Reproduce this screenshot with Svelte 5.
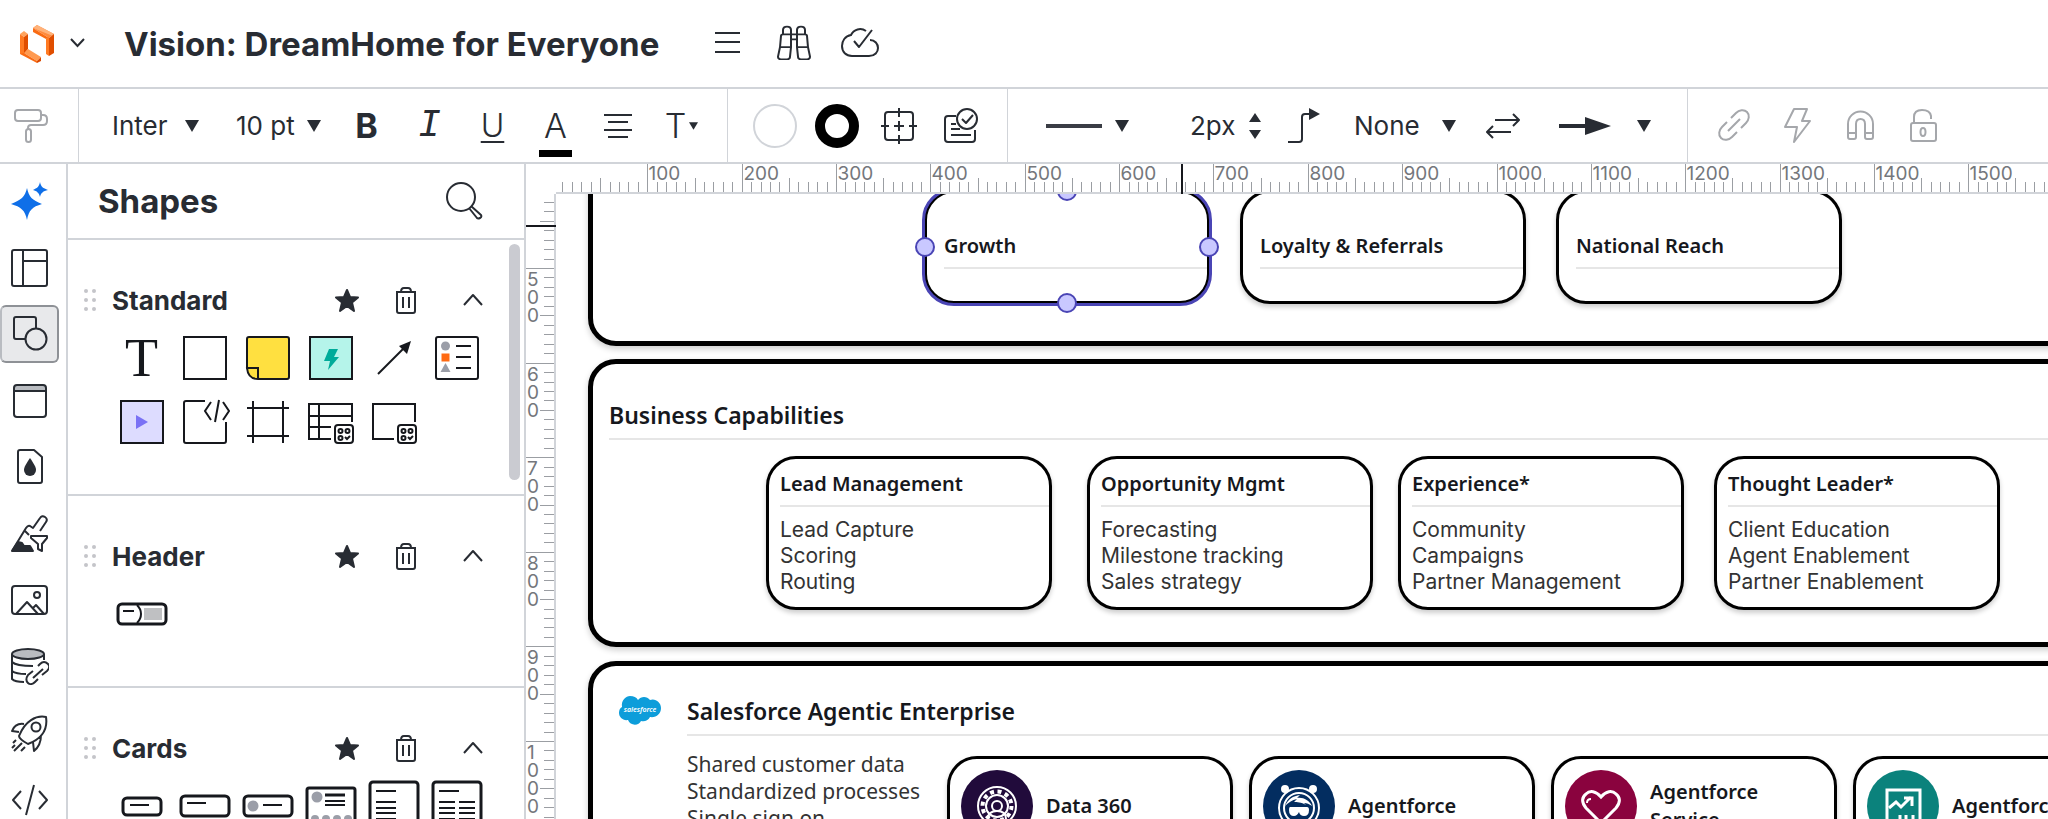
<script>
	let title = 'Vision: DreamHome for Everyone';
	let font = 'Inter';
	let size = '10 pt';
	let lineWidth = '2px';
	let lineJump = 'None';
	let activeTool = 'shapes';

	// icon bodies, all stroked with currentColor by the svg around them
	const icons = {
		menu: '<path d="M4 6h25M4 15h25M4 25h25"/>',
		binoculars:
			'<path transform="translate(5 2) scale(1 .86)" d="M7 12V7q0-4 4-4t4 4v5M21 12V7q0-4 4-4t4 4v5M4 27l1-13q0-2 2-2h22q2 0 2 2l1 13M4 27h11V12M21 12v15h11M15 18h6M4 27L2 38q0 3 3 3h6q3 0 3-3l1-11M32 27l2 11q0 3-3 3h-6q-3 0-3-3l-1-11"/>',
		cloud:
			'<path transform="translate(0 -2)" d="M25 8A10 10 0 0 0 10 12C4 13 1 18 1 23c0 6 4 10 10 10h17c6 0 9-4 9-8s-3-8-8-8M13 18l5 6L31 7"/>',
		roller:
			'<rect x="1" y="2" width="26" height="11" rx="3"/><path d="M27 7h2q4 0 4 4v2q0 4-4 4H17q-3 0-3 3v1"/><rect x="12" y="21" width="5" height="13" rx="2.5"/>',
		align: '<path d="M3 7h28M7 14h20M3 22h28M7 29h20"/>',
		crosshair:
			'<path d="M13 4H7q-3 0-3 3v6M23 4h6q3 0 3 3v6M13 32H7q-3 0-3-3v-6M23 32h6q3 0 3-3v-6M13 4h10M13 32h10M4 13v10M32 13v10M18 0v9M18 27v9M0 18h8M28 18h8M18 13v10M13 18h10"/>',
		review:
			'<path d="M13 8H5q-3 0-3 3v20q0 3 3 3h24q3 0 3-3V22M8 16h5M8 21h9M8 27h20"/><circle cx="24" cy="11" r="10"/><path d="M19 11l4 4 7-8"/>',
		elbow: '<path d="M1 34h11q3 0 3-3V9q0-3 3-3h6"/><path fill="currentColor" stroke="none" d="M22 0l11 6-11 6z"/>',
		swap: '<path d="M9 12h24M27 6l6 6-6 6M25 24H1M7 18l-6 6 6 6"/>',
		link: '<path d="M14 10l5-5c3-3 8-4 11-1s2 8-1 11l-5 5M20 24l-5 5c-3 3-8 4-11 1s-2-8 1-11l5-5M11 23L23 11"/>',
		bolt: '<path d="M14 1h13l-5 12h8L14 34l3-15H5z"/>',
		magnet:
			'<path d="M5 29V16a12 12 0 0 1 25 0v13q0 2-2 2h-4q-2 0-2-2V16q0-5-4.500-5T13 16v13q0 2-2 2H7q-2 0-2-2zM5 25h8M22 25h8"/>',
		lock: '<rect x="5" y="15" width="25" height="18" rx="2"/><path d="M8 15V9q0-7 8-7t9 6v3"/><ellipse cx="17" cy="24" rx="2.500" ry="4"/>',
		search:
			'<circle cx="15" cy="15" r="14"/><path d="M25 24l10 9q1 2-1 3t-3 0l-8-10"/>',
		sparkle:
			'<path fill="#0f6fe8" stroke="none" d="M16 6c2 9 5 12 15 16-10 3-13 6-15 16-2-10-6-13-16-16 10-4 14-7 16-16zM29 0c1 5 3 6 8 8-5 1-7 3-8 7-1-4-3-6-7-7 4-2 6-3 7-8z"/>',
		templates: '<rect x="1" y="1" width="35" height="36" rx="2"/><path d="M12 1v36M12 12h24"/>',
		shapes: '<path d="M14 24H5q-2 0-2-2V4q0-2 2-2h18q2 0 2 2v9"/><circle cx="25" cy="24" r="10.500"/>',
		container:
			'<path fill="#b9bcc1" stroke="none" d="M3 4h32v6H3z"/><rect x="3" y="3" width="32" height="32" rx="3"/><path d="M3 9h32"/>',
		drop: '<path d="M9 2h14l8 7v24q0 2-2 2H9q-2 0-2-2V4q0-2 2-2z"/><path fill="currentColor" stroke="none" d="M19 10c4 6 6 9 6 12a6 6 0 0 1-12 0c0-3 2-6 6-12z"/>',
		brush:
			'<path d="M1 36L15 13q2-3 4-2l3 2 7-10q2-3 5-1t1 5l-6 9M14 16l4 4"/><path fill="currentColor" d="M1 36l6-9 4 1 2 3h6l3 5z"/><path d="M20 21h16v2l-5 6v7l-4-2v-5l-7-6z"/>',
		image:
			'<rect x="1" y="5" width="35" height="28" rx="3"/><circle cx="26" cy="14" r="3"/><path d="M5 33l11-12 11 12M22 27l3-3 8 9"/>',
		data: '<ellipse cx="17" cy="6" rx="16" ry="5" fill="#b9bcc1"/><path d="M1 6v25q3 3 12 3M33 6v6M1 14q4 4 21 4M1 23q4 3 14 3M27 18l2-2c3-3 6-2 8 0s1 5-1 7l-5 4M27 31l-3 3c-2 2-5 3-7 1s-2-5 0-8l5-4M22 30l10-9"/>',
		rocket:
			'<path d="M35 3c-10-2-21 4-27 19q0 3 9 8c13-5 20-14 18-27zM13 10C6 9 3 12 1 17l7 1M30 21c0 7-2 12-7 16l-1-9M5 26l-3 3M11 29l-8 8M14 33l-4 4M1 34l3-3"/><circle cx="25" cy="13" r="4.500"/>',
		code: '<path d="M10 10L2 19l8 9M28 10l8 9-8 9M23 4l-8 30"/>',
		star: '<path fill="currentColor" d="M13 3l3 7 8 .5-6 5 2 8.500-7-5-7 5 2-8.500-6-5 8-.5z"/>',
		trash:
			'<path d="M3 5h20M8 5q0-4 3-4h4q3 0 3 4M4 5v19q0 2 2 2h14q2 0 2-2V5M10 10v11M16 10v11"/>',
		up: '<path d="M4 18l9-10 9 10"/>'
	};

	const rail = [
		['sparkle', 'AI assistant'],
		['templates', 'Templates'],
		['shapes', 'Shapes'],
		['container', 'Containers'],
		['drop', 'Themes'],
		['brush', 'Conditional formatting'],
		['image', 'Images'],
		['data', 'Data linking'],
		['rocket', 'Accelerators'],
		['code', 'Developer tools']
	];

	// library tiles, drawn in a 52px box
	const badge =
		'<rect x="30" y="29" width="18" height="18" rx="3"/><circle cx="35.500" cy="35" r="2"/><circle cx="42.500" cy="35" r="2"/><circle cx="35.500" cy="42" r="2"/><path d="M40 41l2 2 3-3"/>';
	const libraries = [
		{
			name: 'Standard',
			tiles: [
				{ name: 'Text', letter: 'T' },
				{ name: 'Block', art: '<path d="M5 5h42v42H5z"/>' },
				{
					name: 'Sticky note',
					art: '<path fill="#ffe040" d="M7 5h38q2 0 2 2v38q0 2-2 2H17L5 36V7q0-2 2-2z"/><path fill="#ffe040" d="M5 36h11v11Q6 47 5 36z"/>'
				},
				{
					name: 'Quick action',
					art: '<path fill="#b5f4ea" d="M5 5h42v42H5z"/><path fill="#00ab9a" stroke="none" d="M24 17h9l-4 8h5L23 38l2-9h-6z"/>'
				},
				{
					name: 'Line',
					art: '<path d="M10 42l26-26"/><path fill="currentColor" stroke="none" d="M43 9l-4 13-8-8z"/>'
				},
				{
					name: 'Legend',
					art: '<rect x="5" y="5" width="42" height="42" rx="2"/><g stroke="none" fill="#9b9ea8"><circle cx="14.500" cy="14" r="4.500"/><path d="M14.500 31l5 9h-10z"/><path fill="#ff6a13" d="M10.500 21.500h8v8h-8z"/></g><path d="M25 14h15M25 25h15M25 36h15"/>'
				},
				{
					name: 'Video',
					art: '<path fill="#dddcff" d="M5 5h42v42H5z"/><path fill="#7a72f5" stroke="none" d="M20 19l12 7-12 7z"/>'
				},
				{
					name: 'Embed',
					art: '<path d="M26 5H7q-2 0-2 2v38q0 2 2 2h38q2 0 2-2V26M32 6l-6 9 6 9M44 6l6 9-6 9M40 4l-4 22"/>'
				},
				{ name: 'Frame', art: '<path d="M5 12h42M5 40h42M11 5v42M41 5v42"/>' },
				{
					name: 'Dynamic table',
					art: `<path d="M47 26V8H4v35h22M4 20h43M4 31h22M14 8v35"/>${badge}`
				},
				{ name: 'Dynamic shape', art: `<path d="M47 26V8H5v35h21"/>${badge}` }
			]
		},
		{
			name: 'Header',
			tiles: [
				{
					name: 'Header bar',
					art: '<rect x="2" y="16" width="48" height="20" rx="4" stroke-width="3"/><path d="M21 17q4 4 4 9t-4 9M7 23h11"/><path fill="#bfc0c2" stroke="none" d="M28 20h18v12H28z"/>'
				}
			]
		},
		{
			name: 'Cards',
			tiles: [
				{
					name: 'Small card',
					art: '<rect x="7" y="18" width="38" height="17" rx="4" stroke-width="3"/><path d="M14 25h19"/>'
				},
				{
					name: 'Card',
					art: '<rect x="2" y="16" width="48" height="20" rx="4" stroke-width="3"/><path d="M8 23h19"/>'
				},
				{
					name: 'Card with icon',
					art: '<rect x="2" y="16" width="48" height="20" rx="4" stroke-width="3"/><circle cx="11" cy="26" r="5.500" fill="#9b9ea8" stroke="none"/><path d="M21 25h19"/>'
				},
				{
					name: 'Profile card',
					art: '<rect x="2" y="8" width="48" height="42" rx="2" stroke-width="3"/><g fill="#9b9ea8" stroke="none"><circle cx="12" cy="17" r="5.500"/><circle cx="10" cy="39" r="4"/><circle cx="21" cy="39" r="4"/><circle cx="32" cy="39" r="4"/><circle cx="43" cy="39" r="4"/></g><path stroke-width="3" d="M20 15h20"/><path d="M20 21h20M20 25h20"/>'
				},
				{
					name: 'Text card',
					art: '<rect x="2" y="2" width="48" height="50" rx="3" stroke-width="3"/><path d="M8 11h20M8 22h20M8 28h20M8 33h20M8 39h20"/>'
				},
				{
					name: 'Two column card',
					art: '<rect x="2" y="2" width="48" height="50" rx="3" stroke-width="3"/><path d="M8 11h20M8 22h16M8 28h16M8 33h16M8 39h16M28 22h16M28 28h16M28 33h16M28 39h16"/>'
				}
			]
		}
	];

	// a tick every ten document units, snapped to whole screen pixels
	function ticks(from, to, offset, scale) {
		let list = [];
		for (let unit = from; unit <= to; unit += 10) {
			list.push({
				unit,
				at: Math.round(offset + unit * scale) + 0.5,
				kind: unit % 100 === 0 ? 'major' : unit % 50 === 0 ? 'mid' : 'minor'
			});
		}
		return list;
	}
	const across = ticks(10, 1580, -3, 0.9435);
	const down = ticks(430, 1080, -399, 0.946);
	const tickStart = { major: 0, mid: 14, minor: 18 };

	const goals = [
		{ x: 368, title: 'Growth', selected: true },
		{ x: 684, title: 'Loyalty & Referrals' },
		{ x: 1000, title: 'National Reach' }
	];
	const capabilities = [
		{ x: 210, title: 'Lead Management', items: ['Lead Capture', 'Scoring', 'Routing'] },
		{
			x: 531,
			title: 'Opportunity Mgmt',
			items: ['Forecasting', 'Milestone tracking', 'Sales strategy']
		},
		{ x: 842, title: 'Experience*', items: ['Community', 'Campaigns', 'Partner Management'] },
		{
			x: 1158,
			title: 'Thought Leader*',
			items: ['Client Education', 'Agent Enablement', 'Partner Enablement']
		}
	];
	const products = [
		{
			x: 391,
			title: 'Data 360',
			color: '#210b3b',
			art: '<circle cx="36" cy="36" r="19"/><circle cx="36" cy="36" r="14.500" stroke-width="4" stroke-dasharray="4 3.600"/><circle cx="36" cy="36" r="11" fill="#210b3b"/><circle cx="36" cy="36" r="5"/><path d="M27 52v-3q0-8 9-8t9 8v3"/>'
		},
		{
			x: 693,
			title: 'Agentforce',
			color: '#032d60',
			art: '<circle cx="36" cy="38" r="20"/><circle cx="22" cy="19" r="3" fill="#fff"/><circle cx="50" cy="19" r="3" fill="#fff"/><circle cx="36" cy="38" r="15"/><path fill="#fff" stroke="none" d="M22 36c3-7 8-10 15-11l-3 3c6-1 12 2 15 8-3-2-5-3-8-3l2 2c-5-3-9-3-12-3l3-3c-5 1-9 4-12 7z"/><path fill="#fff" stroke="none" d="M27 37h17q2 0 2 3 0 6-5 6-4 0-5-4-2 4-5 4-5 0-5-6 0-3 1-3z"/>'
		},
		{
			x: 995,
			title: 'Agentforce Service',
			color: '#8a033e',
			art: '<path stroke-width="3" d="M36 53L21 38c-5-6-4-11 0-14 4-4 10-3 15 3 5-6 11-7 15-3 4 3 5 8 0 14z"/><path d="M22 33q0-4 4-4"/>'
		},
		{
			x: 1297,
			title: 'Agentforce',
			color: '#0b827c',
			art: '<path stroke-width="3" d="M20 54V20h33v34z"/><path stroke-width="3" d="M22 38l7-6 5 5 10-10M37 28h8v8M27 54v-5M33 54v-9M39 54v-9M46 54v-9"/>'
		}
	];
</script>

{#snippet icon(name, box = 38)}
	<svg class="icon" width={box} height={box} viewBox="0 0 {box} {box}" aria-hidden="true">
		{@html icons[name]}
	</svg>
{/snippet}

{#snippet caret()}
	<svg class="caret" width="14" height="12" viewBox="0 0 14 12" aria-hidden="true">
		<path d="M0 0h14l-7 12z" />
	</svg>
{/snippet}

<div class="app">
	<header>
		<button class="logo" aria-label="Home menu">
			<svg width="66" height="40" viewBox="0 0 66 40" aria-hidden="true">
				<path fill="#ff8a3c" d="M13 4l4-3 17 9-5 4z" />
				<path fill="#ffb27a" d="M13 4l4-3 17 9-1 2z" />
				<path fill="#f96b13" d="M13 4l16 10-3 1L13 8z" />
				<path fill="#ff7a22" d="M26 15l3-2v19l-3-2z" />
				<path fill="#e04e00" d="M29 14l5-4v19l-5 3z" />
				<path fill="#ffa45e" d="M0 10l4-3 4 3-4 3z" />
				<path fill="#ff7a22" d="M0 10l4 3v17L0 30z" />
				<path fill="#e04e00" d="M4 13l4-3v15l-4 5z" />
				<path fill="#ff9a50" d="M4 29l4-4 13 8-4 4z" />
				<path fill="#f96b13" d="M0 30l4-1 13 8v2z" />
				<path fill="#d94800" d="M17 37l4-4v4l-4 2z" />
				<path fill="none" stroke="#282c33" stroke-width="2" d="M51 15l6.500 7 6.500-7" />
			</svg>
		</button>
		<h1>{title}</h1>
		<nav>
			<button aria-label="Menu">{@render icon('menu', 34)}</button>
			<button aria-label="Find">{@render icon('binoculars', 44)}</button>
			<button aria-label="Saved">{@render icon('cloud')}</button>
		</nav>
	</header>

	<div class="toolbar">
		<div class="group painter">
			<button aria-label="Format painter" class="muted">{@render icon('roller', 36)}</button>
		</div>

		<div class="group type">
			<label class="field family">
				<select bind:value={font} aria-label="Font">
					<option>Inter</option>
					<option>Arial</option>
				</select>
				{@render caret()}
			</label>
			<label class="field points">
				<select bind:value={size} aria-label="Font size">
					<option>10 pt</option>
					<option>12 pt</option>
				</select>
				{@render caret()}
			</label>
			<button class="slot bold" aria-label="Bold">B</button>
			<button class="slot italic" aria-label="Italic">I</button>
			<button class="slot underline" aria-label="Underline">U</button>
			<button class="slot ink" aria-label="Text color">A</button>
			<button class="slot" aria-label="Align">{@render icon('align', 35)}</button>
			<button class="slot more" aria-label="Text options">
				T<svg class="caret" width="9" height="8" viewBox="0 0 14 12"><path d="M0 0h14l-7 12z" /></svg>
			</button>
		</div>

		<div class="group paint">
			<button class="slot" aria-label="Fill color"><span class="fill"></span></button>
			<button class="slot" aria-label="Line color"><span class="ring"></span></button>
			<button class="slot" aria-label="Position">{@render icon('crosshair', 36)}</button>
			<button class="slot" aria-label="Status">{@render icon('review', 36)}</button>
		</div>

		<div class="group lines">
			<button class="style" aria-label="Line style">
				<span class="stroke"></span>
				{@render caret()}
			</button>
			<label class="field width">
				<input type="text" bind:value={lineWidth} aria-label="Line width" />
				<svg class="caret" width="12" height="26" viewBox="0 0 12 26" aria-hidden="true">
					<path d="M6 0l6 9H0zM6 26l6-9H0z" />
				</svg>
			</label>
			<button class="elbow" aria-label="Line shape">{@render icon('elbow', 35)}</button>
			<label class="field jump">
				<select bind:value={lineJump} aria-label="Start arrow">
					<option>None</option>
					<option>Arrow</option>
				</select>
				{@render caret()}
			</label>
			<button class="swap" aria-label="Swap ends">{@render icon('swap', 35)}</button>
			<button class="end" aria-label="End arrow">
				<svg class="caret" width="52" height="18" viewBox="0 0 52 18" aria-hidden="true">
					<path d="M0 7h26V0l26 9-26 9v-7H0z" />
				</svg>
				{@render caret()}
			</button>
		</div>

		<div class="group last">
			{#each ['link', 'bolt', 'magnet', 'lock'] as name}
				<button class="slot muted" aria-label={name}>{@render icon(name, 35)}</button>
			{/each}
		</div>
	</div>

	<div class="body">
		<nav class="rail">
			{#each rail as [name, label]}
				<button class:active={activeTool === name} aria-label={label}>
					{@render icon(name)}
				</button>
			{/each}
		</nav>

		<aside>
			<div class="heading">
				<h2>Shapes</h2>
				<button aria-label="Search shapes">{@render icon('search')}</button>
			</div>
			<div class="libraries">
				{#each libraries as library}
					<section>
						<div class="name">
							<span class="grip">
								{#each Array(6) as _}<i></i>{/each}
							</span>
							<h3>{library.name}</h3>
							<button aria-label="Pin">{@render icon('star', 26)}</button>
							<button aria-label="Remove">{@render icon('trash', 27)}</button>
							<button aria-label="Collapse">{@render icon('up', 26)}</button>
						</div>
						<div class="tiles">
							{#each library.tiles as tile}
								<button aria-label={tile.name}>
									{#if tile.letter}
										<span class="letter">{tile.letter}</span>
									{:else}
										<svg class="icon tile" width="52" height="52" viewBox="0 0 52 52">
											{@html tile.art}
										</svg>
									{/if}
								</button>
							{/each}
						</div>
					</section>
				{/each}
				<span class="scrollbar"></span>
			</div>
		</aside>

		<main>
			<div class="corner"></div>
			<svg class="ruler top" aria-hidden="true">
				{#each across as tick}
					<line class={tick.kind} x1={tick.at} x2={tick.at} y1={tickStart[tick.kind]} y2="28" />
					{#if tick.kind === 'major'}
						<text x={tick.at + 1} y="16">{tick.unit}</text>
					{/if}
				{/each}
				<line class="cursor" x1="626" x2="626" y1="0" y2="30" />
			</svg>
			<svg class="ruler side" aria-hidden="true">
				{#each down as tick}
					<line class={tick.kind} x1={tickStart[tick.kind]} x2="28" y1={tick.at} y2={tick.at} />
					{#if tick.kind === 'major'}
						{#each String(tick.unit) as digit, i}
							<text x="1" y={tick.at + 17 + i * 18}>{digit}</text>
						{/each}
					{/if}
				{/each}
				<line class="cursor" x1="0" x2="30" y1="32" y2="32" />
			</svg>

			<div class="canvas">
				<div class="frame goals"></div>
				<div class="frame capabilities">
					<h2>Business Capabilities</h2>
				</div>
				<div class="frame enterprise">
					<svg width="44" height="32" viewBox="0 0 44 32" aria-hidden="true">
						<path
							fill="#0d9dda"
							d="M4 12C3 5 8 1 12 1c4 0 6 1 8 4 3-4 9-4 12 0 5-2 11 2 11 8s-5 10-11 9c-2 4-6 5-9 4-2 5-11 5-13-1-5 1-9-3-9-7 0-3 1-5 3-6z"
						/>
						<text x="22" y="17" text-anchor="middle">salesforce</text>
					</svg>
					<div>
						<h2>Salesforce Agentic Enterprise</h2>
						<p>Shared customer data<br />Standardized processes<br />Single sign on</p>
					</div>
				</div>

				{#each goals as node}
					<article class="goal" class:selected={node.selected} style="left: {node.x}px">
						<h4>{node.title}</h4>
						{#if node.selected}
							<b class="handle n"></b>
							<b class="handle e"></b>
							<b class="handle s"></b>
							<b class="handle w"></b>
						{/if}
					</article>
				{/each}

				{#each capabilities as node}
					<article class="capability" style="left: {node.x}px">
						<h4>{node.title}</h4>
						<ul>
							{#each node.items as item}
								<li>{item}</li>
							{/each}
						</ul>
					</article>
				{/each}

				{#each products as node}
					<article class="product" style="left: {node.x}px">
						<svg width="72" height="72" viewBox="0 0 72 72" aria-hidden="true">
							<circle cx="36" cy="36" r="36" fill={node.color} stroke="none" />
							{@html node.art}
						</svg>
						<h4>{node.title}</h4>
					</article>
				{/each}
			</div>
		</main>
	</div>
</div>

<style>
	:global(body) {
		overflow: hidden;
	}
	.app {
		--ink: #282c33;
		--line: #d1d4d9;
		height: 100vh;
		display: flex;
		flex-direction: column;
		background: #fff;
		color: var(--ink);
		font-family: Inter, sans-serif;
	}
	* {
		box-sizing: border-box;
	}
	h1,
	h2,
	h3,
	h4,
	p,
	ul {
		margin: 0;
		padding: 0;
	}
	button {
		display: flex;
		align-items: center;
		justify-content: center;
		flex: none;
		padding: 0;
		border: 0;
		background: none;
		color: inherit;
		font: inherit;
	}
	svg {
		display: block;
		flex: none;
	}
	.icon {
		fill: none;
		stroke: currentColor;
		stroke-width: 2;
		stroke-linejoin: round;
	}
	.caret {
		fill: var(--ink);
	}

	header {
		flex: none;
		display: flex;
		align-items: center;
		height: 89px;
		padding: 0 20px;
		border-bottom: 2px solid var(--line);
	}
	h1 {
		margin-left: 38px;
		font-size: 33px;
		font-weight: 700;
		white-space: nowrap;
	}
	header nav {
		display: flex;
		align-items: center;
		gap: 26px;
		margin-left: 52px;
	}

	.toolbar {
		flex: none;
		display: flex;
		height: 75px;
		border-bottom: 2px solid var(--line);
		font-size: 26px;
	}
	.group {
		flex: none;
		display: flex;
		align-items: center;
		border-right: 1px solid var(--line);
	}
	.last {
		border: 0;
		padding-left: 15px;
	}
	.muted {
		color: #a5a7ab;
	}
	.painter {
		width: 79px;
		padding-left: 14px;
	}
	.type {
		padding: 0 14px 0 33px;
	}
	.paint {
		padding: 0 15px 0 16px;
	}
	.lines {
		padding: 0 36px 0 38px;
	}
	.slot {
		width: 63px;
		height: 60px;
	}
	.paint .slot {
		width: 62px;
	}
	.field {
		flex: none;
		display: flex;
		align-items: center;
	}
	.field select,
	.field input {
		appearance: none;
		flex: none;
		padding: 0;
		border: 0;
		background: none;
		color: inherit;
		font: inherit;
	}
	.family {
		width: 124px;
	}
	.family select {
		width: 73px;
	}
	.points {
		width: 99px;
	}
	.points select {
		width: 71px;
	}
	.bold {
		font-size: 34px;
		font-weight: 700;
	}
	.italic {
		font-family: 'Liberation Mono', monospace;
		font-size: 38px;
		font-style: italic;
	}
	.underline {
		font-size: 32px;
		font-weight: 300;
		text-decoration: underline 2px;
		text-underline-offset: 4px;
	}
	.ink {
		position: relative;
		font-size: 34px;
		font-weight: 300;
	}
	.ink::after {
		content: '';
		position: absolute;
		left: 15px;
		bottom: -1px;
		width: 33px;
		height: 7px;
		background: #000;
	}
	.more {
		gap: 3px;
		font-size: 34px;
		font-weight: 300;
	}
	.fill,
	.ring {
		width: 44px;
		height: 44px;
		border: 2px solid var(--line);
		border-radius: 50%;
	}
	.ring {
		border: 10px solid #000;
	}
	.style {
		gap: 13px;
	}
	.stroke {
		width: 56px;
		height: 4px;
		background: #3a3d45;
	}
	.width {
		margin-left: 61px;
	}
	.width input {
		width: 59px;
	}
	.elbow {
		margin-left: 26px;
	}
	.jump {
		margin-left: 32px;
	}
	.jump select {
		width: 88px;
	}
	.swap {
		margin-left: 30px;
	}
	.end {
		margin-left: 38px;
		gap: 26px;
	}

	.body {
		flex: 1;
		display: flex;
		min-height: 0;
	}
	.rail {
		flex: none;
		display: flex;
		flex-direction: column;
		gap: 8px;
		width: 68px;
		padding-top: 8px;
		border-right: 2px solid var(--line);
		overflow: hidden;
	}
	.rail button {
		width: 59px;
		height: 58px;
		border-radius: 6px;
	}
	.rail button:nth-child(odd) {
		margin-bottom: 1px;
	}
	.rail .active {
		border: 2px solid #8e9196;
		border-left-color: #b9bcc1;
		background: #e8e9eb;
	}

	aside {
		flex: none;
		display: flex;
		flex-direction: column;
		width: 458px;
		border-right: 2px solid var(--line);
	}
	.heading {
		flex: none;
		display: flex;
		align-items: center;
		justify-content: space-between;
		height: 76px;
		padding: 0 40px 0 30px;
		border-bottom: 2px solid var(--line);
	}
	.heading h2 {
		font-size: 33px;
		font-weight: 700;
	}
	.libraries {
		position: relative;
		flex: 1;
		min-height: 0;
		overflow: hidden;
	}
	.scrollbar {
		position: absolute;
		top: 4px;
		right: 4px;
		width: 11px;
		height: 236px;
		border-radius: 6px;
		background: #cacbd1;
	}
	section {
		padding: 34px 0 40px;
		border-bottom: 2px solid var(--line);
	}
	.name {
		display: flex;
		align-items: center;
		height: 52px;
		padding: 0 38px 0 16px;
	}
	.name button {
		width: 26px;
		margin-left: 33px;
	}
	.name button:last-child {
		margin-left: 41px;
	}
	.grip {
		display: grid;
		grid-template-columns: 4px 4px;
		gap: 5px 4px;
	}
	.grip i {
		height: 4px;
		border-radius: 50%;
		background: #c4c5c9;
	}
	h3 {
		flex: 1;
		margin-left: 16px;
		font-size: 26px;
		font-weight: 700;
	}
	.tiles {
		display: grid;
		grid-template-columns: repeat(6, 63px);
		grid-auto-rows: 64px;
		padding-left: 42px;
		color: #16181d;
	}
	.tile {
		stroke-linejoin: miter;
	}
	.letter {
		font-family: 'Liberation Serif', serif;
		font-size: 54px;
		line-height: 52px;
	}

	main {
		flex: 1;
		display: grid;
		grid-template: 30px 1fr / 30px 1fr;
		min-width: 0;
		overflow: hidden;
	}
	.ruler {
		width: 100%;
		height: 100%;
		overflow: visible;
		stroke: #9b9ea3;
	}
	.ruler text {
		fill: #74777c;
		stroke: none;
		font-size: 19px;
	}
	.ruler .cursor {
		stroke: #16181d;
		stroke-width: 2;
	}
	.top {
		border-bottom: 2px solid var(--line);
	}
	.side {
		border-right: 2px solid var(--line);
	}

	.canvas {
		position: relative;
		overflow: hidden;
		color: #16181d;
		font-family: 'Noto Sans', sans-serif;
	}
	.frame {
		position: absolute;
		left: 32px;
		width: 1800px;
		border: 5px solid #000;
		border-radius: 28px;
		box-shadow: 0 3px 6px #0003;
	}
	.frame h2 {
		padding-bottom: 7px;
		border-bottom: 2px solid #e6e6e6;
		font-size: 23px;
		font-weight: 600;
		line-height: 32px;
	}
	.goals {
		top: -200px;
		height: 352px;
	}
	.capabilities {
		top: 165px;
		height: 288px;
		padding: 35px 0 0 16px;
	}
	.enterprise {
		top: 467px;
		height: 400px;
		display: flex;
		gap: 25px;
		padding: 29px 0 0 25px;
	}
	.enterprise div {
		flex: 1;
	}
	.enterprise text {
		fill: #fff;
		font-size: 7px;
		font-style: italic;
		font-weight: 600;
	}
	.enterprise p {
		padding-top: 15px;
		color: #333;
		font-size: 21px;
		line-height: 27px;
	}

	article {
		position: absolute;
		width: 286px;
		border: 3px solid #000;
		border-radius: 30px;
		background: #fff;
		box-shadow: 0 3px 5px #0003;
	}
	h4 {
		font-size: 20px;
		font-weight: 600;
		line-height: 28px;
	}
	.goal {
		top: -4px;
		height: 114px;
		padding: 39px 0 0 17px;
	}
	.goal h4,
	.capability h4 {
		padding-bottom: 7px;
		border-bottom: 2px solid #e6e6e6;
	}
	.selected {
		box-shadow: none;
	}
	.selected::before {
		content: '';
		position: absolute;
		inset: -5px;
		border: 3px solid #4a45b5;
		border-radius: 32px;
	}
	.handle {
		position: absolute;
		width: 20px;
		height: 20px;
		border: 2px solid #4a45b5;
		border-radius: 50%;
		background: #c9c8ff;
	}
	.n,
	.s {
		left: calc(50% - 10px);
	}
	.e,
	.w {
		top: calc(50% - 10px);
	}
	.n {
		top: -12px;
	}
	.s {
		bottom: -12px;
	}
	.e {
		right: -12px;
	}
	.w {
		left: -12px;
	}
	.capability {
		top: 262px;
		height: 154px;
		padding: 11px 0 0 11px;
	}
	ul {
		padding-top: 10px;
		color: #333;
		font-family: Inter, sans-serif;
		font-size: 21px;
		line-height: 26px;
		list-style: none;
	}
	.product {
		top: 562px;
		height: 180px;
		display: flex;
		align-items: flex-start;
		gap: 13px;
		padding: 11px;
	}
	.product svg {
		fill: none;
		stroke: #fff;
		stroke-width: 2;
	}
	.product h4 {
		align-self: flex-start;
		display: flex;
		align-items: center;
		width: 130px;
		height: 72px;
	}
</style>
